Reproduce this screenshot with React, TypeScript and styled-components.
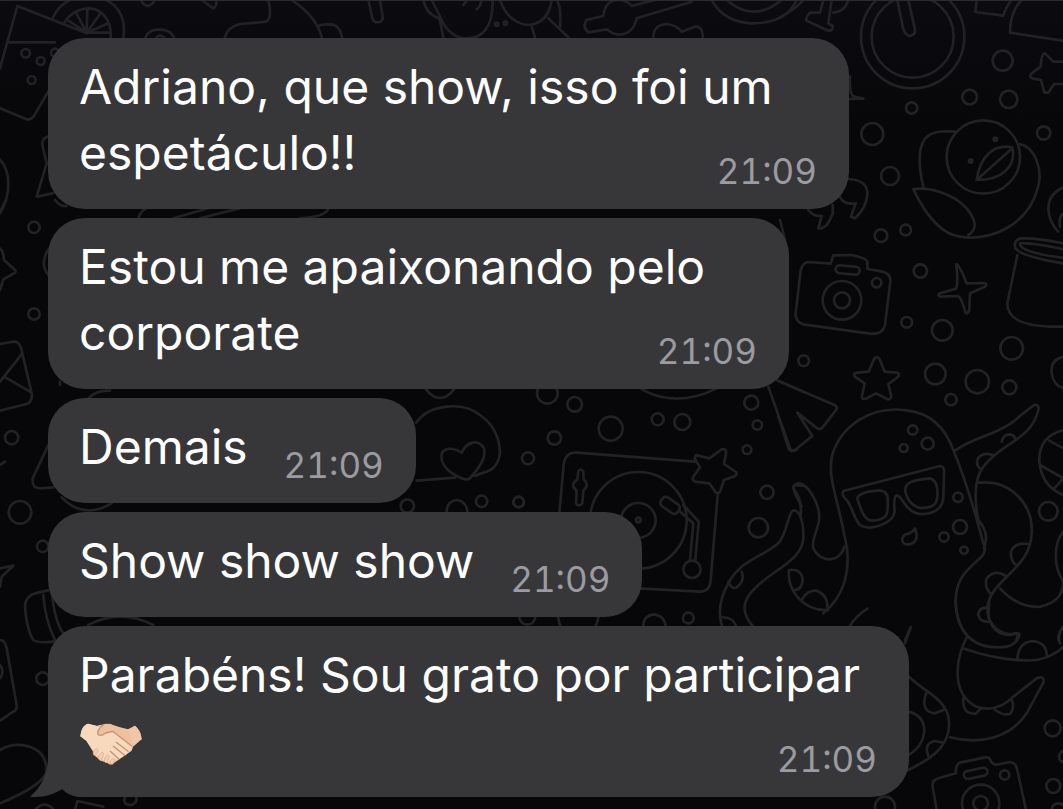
import React from "react";
import styled, { createGlobalStyle } from "styled-components";

const GlobalStyle = createGlobalStyle`
  * { box-sizing: border-box; }
  body { margin: 0; background: #070709; }
`;

const Screen = styled.main`
  position: relative;
  min-height: 100vh;
  overflow: hidden;
  padding: 38px 48px 12px;
  background: linear-gradient(#0b0b10 0, #070709 140px);
  font-family: Inter, "Liberation Sans", sans-serif;
`;

const Wallpaper = styled.svg`
  position: absolute;
  inset: 0;
  width: 100%;
  height: 100%;
  fill: none;
  stroke: #222225;
  stroke-width: 8;
  stroke-linecap: round;
  stroke-linejoin: round;
`;

const TopEdge = styled.div`
  position: absolute;
  inset: 0 0 auto;
  height: 1px;
  background: #2b2b2d;
`;

const Thread = styled.ol`
  position: relative;
  display: flex;
  flex-direction: column;
  align-items: flex-start;
  gap: 9px;
  margin: 0;
  padding: 0;
  list-style: none;
`;

const Bubble = styled.li<{ $width?: number }>`
  position: relative;
  display: grid;
  grid-template-columns: ${(p) => (p.$width ? "1fr" : "auto auto")};
  column-gap: 36px;
  width: ${(p) => (p.$width ? `${p.$width}px` : "auto")};
  max-width: 100%;
  padding: 16px 32px 23px 31px;
  border-radius: 37px;
  background: #373739;
`;

const Message = styled.p`
  grid-row: 1;
  grid-column: 1;
  margin: 0;
  color: #fff;
  font-size: 48px;
  line-height: 66px;
`;

const Line = styled.span`
  display: block;
  width: fit-content;
`;

const Stamp = styled.time`
  grid-row: 1;
  grid-column: -2;
  place-self: end;
  color: #9b9ba1;
  font-size: 35px;
  line-height: 30px;
  font-variant-numeric: tabular-nums;
`;

const Tail = styled.svg`
  position: absolute;
  left: -18px;
  bottom: 0;
  width: 54px;
  height: 54px;
  fill: #373739;
`;

const Emoji = styled.svg`
  display: inline-block;
  width: 64px;
  height: 44px;
  vertical-align: -8px;
`;

type Dot = [number, number, number];
const Dots = ({ at }: { at: Dot[] }) => (
  <>
    {at.map(([x, y, r]) => (
      <circle key={`${x}-${y}`} cx={x} cy={y} r={r} />
    ))}
  </>
);

const third = (x: number, y: number) => `translate(${x} ${y}) scale(.33333)`;

const Doodles = () => (
  <Wallpaper aria-hidden="true">
    {/* drink, lime slice and shapes at the top left */}
    <g transform={third(0, 0)}>
      <path d="M260 100L52 18L0 205M22 127H165M0 325L78 357Q92 362 102 348L150 265M158 55C180 0 235-15 285-10C350 0 380 50 370 112M192 70C220 20 285 10 315 50Q335 75 332 112M260 98L205 62M260 98L228 38M260 98L262 28M260 98L300 42M260 98L325 70M260 98H328" />
      <Dots at={[[77, 160, 13], [122, 183, 12], [95, 240, 12], [165, 158, 12]]} />
      <path d="M150 408Q125 412 127 435L140 490L110 590L158 580M-10 470C40 510 30 590 0 640M165 600Q180 620 200 618M415 655Q420 630 450 620M520 655L640 620M600 655L720 625M900 655Q980 650 985 625" />
      <path d="M425 5Q442 30 462 5M605 0L640 25Q650 20 650 0M437 112Q445 88 480 88Q512 90 522 112M470 112Q480 102 492 112M805 0Q820 65 790 66L720 72Q685 80 674 112M875 0Q950 50 965 112M955 78Q970 70 1000 75" />
    </g>

    {/* instruments and faces along the top edge */}
    <g transform={third(330, 0)}>
      <path d="M115 0L127 55Q130 70 150 66Q160 62 158 50L150 0M280 0Q290 45 328 55L340 112M305 0L328 45Q350 105 400 115Q490 120 488 0M0 72Q30 75 36 112M400 15L408 5M440 28Q455 15 453 0M510 0Q535 70 595 75Q655 70 665 0M605 78L615 112M655 55L715 112M690 80Q695 20 680 0M770 60L820 48Q825 0 865 0Q890 0 905 18L975 0M770 60Q755 80 775 97L830 88Q850 105 872 104Q910 100 920 55L1085 5M970 112Q970 75 1010 72Q1040 75 1055 95L1095 80Q1120 78 1118 112M1145 0Q1180 65 1265 70Q1370 70 1400 0M1190 0Q1270 70 1355 0" />
      <circle cx="500" cy="73" r="5" />
      <circle cx="526" cy="70" r="5" />
    </g>

    {/* compass, star and lemon bird */}
    <g transform={third(780, 0)}>
      <path d="M0 52Q50 25 70 0M130 0L120 38L90 38Q75 55 80 62L145 92Q160 92 158 78L145 70L150 35L155 0M160 38Q195 35 205 0" />
      <circle cx="398" cy="110" r="155" />
      <circle cx="398" cy="110" r="123" />
      <path d="M352 0L370 88Q378 108 390 108Q407 104 405 88L385 0M590 0L586 36L670 47Q678 20 695 0M725 0Q690 35 690 98L849 122M850 185L820 185L795 160Q784 160 782 200L755 220Q745 232 760 236L783 240L793 278L805 278L822 252H850M210 230Q208 275 218 288Q225 292 250 296L210 297" />
      <Dots at={[[668, 182, 30], [569, 291, 22], [686, 298, 26], [395, 324, 17], [277, 402, 33], [330, 528, 27], [791, 399, 20], [303, 707, 19], [377, 690, 16]]} />
      <circle cx="610" cy="471" r="110" />
      <path d="M525 395Q475 390 450 404C410 425 415 500 430 560M718 432C765 440 790 510 773 565C745 670 640 725 540 710C470 700 425 620 400 568C445 560 520 580 560 625Q605 680 565 705M590 540C600 470 640 430 697 442C710 500 665 540 590 540L697 445" />
      <circle cx="572" cy="483" r="5" />
      <circle cx="646" cy="418" r="5" />
      <path d="M205 537Q265 540 262 585Q258 625 225 655L213 650L227 610Q190 615 180 590M85 630Q100 650 125 648L115 685Q140 690 158 640L158 615M850 562Q800 585 806 635Q810 670 835 695M850 640Q835 650 840 680M0 660L15 720" />
    </g>

    {/* camera, sparkle, pot and star */}
    <g transform={third(780, 230)}>
      <path d="M85 96L152 101L160 76L215 75Q260 85 262 95L262 117L305 124Q333 130 331 155L315 285Q308 315 270 311L70 283Q45 275 47 250L62 120Q68 98 85 96Z" />
      <rect x="167" y="108" width="72" height="24" rx="12" transform="rotate(5 203 120)" />
      <circle cx="186" cy="211" r="58" />
      <Dots at={[[186, 211, 24], [290, 158, 14], [421, 123, 20], [380, 277, 16], [487, 301, 31], [695, 355, 34], [71, 392, 16], [466, 432, 31], [592, 455, 35], [688, 472, 21], [513, 509, 17], [398, 600, 14], [443, 641, 18], [371, 654, 12]]} />
      <path d="M529 103Q538 103 560 160L612 159Q625 162 615 170L570 190L568 240Q563 255 556 247Q545 205 535 198L480 200Q470 195 480 190L528 176Q535 160 529 103ZM283 385Q291 376 299 388L314 425L352 428Q363 433 350 444L325 462L334 500Q330 513 318 505L288 490L258 506Q243 510 246 498L254 460L224 440Q218 428 232 428L266 425Z" />
      <path d="M850 40Q760 22 718 26Q700 35 706 55Q725 80 850 100M850 58Q760 38 720 40Q715 65 850 84M712 75L682 220Q680 285 810 290H850M850 380Q810 390 815 430Q820 465 850 475M0 455L162 524Q175 530 168 540L128 592Q118 602 108 592L52 548L97 618L45 660Q32 668 26 655L-5 560" />
    </g>

    {/* octopus wearing glasses */}
    <g transform={third(780, 400)}>
      <path d="M130 640C190 590 220 510 193 405C170 285 140 225 158 160C185 80 270 15 380 31C460 40 500 95 520 150C545 210 570 280 610 430Q622 455 600 475C560 510 520 540 528 625Q535 690 580 722M523 153C590 105 640 110 700 65Q740 30 765 14Q778 12 775 30C755 120 660 130 610 200C580 240 585 310 595 360Q630 400 612 445M598 248C690 240 760 310 755 400C750 510 635 535 622 620C620 690 680 710 715 700L708 725M660 565Q715 625 780 620Q850 605 850 545C820 500 820 430 850 395M665 125Q670 103 690 103Q705 105 706 120M605 210Q585 195 594 175Q610 155 637 165M743 432Q705 425 693 455Q690 485 712 498M680 530Q645 505 620 535Q612 560 632 582M625 622Q595 622 595 645Q600 668 628 665" />
      <path d="M190 273L480 198Q495 200 492 220L490 290C490 335 440 350 405 338C370 325 370 290 350 286Q340 290 344 335C340 370 270 395 240 375C220 355 215 310 195 295Q185 285 190 273ZM232 296Q235 275 300 271Q325 275 323 300C325 340 325 360 275 362C250 360 240 320 232 296ZM376 264Q380 240 450 235Q470 240 472 270C475 310 465 325 420 324C390 315 375 290 376 264ZM405 385Q420 425 388 433Q365 435 367 415Q370 402 388 400Q400 395 405 385Z" />
      <Dots at={[[534, 292, 14], [540, 381, 21], [492, 411, 14], [552, 451, 11], [805, 334, 28]]} />
      <path d="M193 440C180 490 120 490 100 445C90 405 140 370 105 300Q80 250 55 250Q35 255 42 268C60 290 65 315 62 345M-80 680Q-135 620 -75 565C-25 510 75 480 70 405C70 350 50 320 35 335C20 360 20 400 -5 430C-50 470 -120 480 -155 550Q-200 630 -165 700M27 510C20 570 70 635 145 630M27 510Q65 505 68 540Q65 570 45 570M65 600Q80 570 110 572Q145 585 142 628M210 678Q225 650 262 626M375 720L392 682M850 90Q775 110 778 185Q785 260 850 285M808 122L850 145M780 195L850 235L820 268M850 685Q835 695 835 720" />
    </g>

    {/* lower tentacles and the second camera */}
    <g transform={third(880, 600)}>
      <path d="M227 0C230 120 300 150 380 140Q415 130 418 102Q410 95 390 105Q340 105 325 50L328 0M262 108C215 200 225 290 290 320Q350 340 400 290L470 235Q495 225 490 248L440 340C390 415 300 435 210 412M248 145C320 170 400 185 470 180Q520 170 550 140M412 178Q415 125 460 123Q500 130 500 165M250 295Q245 340 285 342L305 325M345 330Q375 350 392 340Q405 320 395 300M75 130L92 82M85 228C130 275 190 290 205 350C220 430 160 475 80 512M85 335Q130 345 133 390Q130 440 85 465M138 280Q120 335 165 340L190 330M145 468Q130 430 165 423L188 428M550 80Q530 100 540 130" />
      <path d="M170 630L158 560Q155 540 175 535L228 520Q225 495 240 488L315 472Q330 470 333 485L345 495L390 486Q408 488 412 510L438 630" />
      <rect x="251" y="508" width="72" height="24" rx="12" transform="rotate(-12 287 520)" />
      <circle cx="302" cy="610" r="56" />
      <Dots at={[[302, 610, 22], [374, 525, 14], [518, 385, 24], [520, 558, 21], [535, 630, 20], [555, 470, 18], [15, 620, 30]]} />
    </g>

    {/* turntable */}
    <g transform={third(520, 380)}>
      <Dots at={[[82, 40, 31], [164, 73, 22], [272, 146, 36], [413, 118, 18], [487, 126, 24], [103, 174, 20], [24, 235, 18], [694, 68, 21], [712, 135, 14], [681, 209, 13], [741, 337, 20], [715, 443, 29], [505, 714, 16], [-4, 366, 16], [22, 710, 24]]} />
      <path d="M118 398L130 265Q132 215 170 218L525 245M593 345L572 600Q570 635 540 635L355 625M528 225L568 235L605 208Q620 205 618 220L612 252L648 276Q655 284 640 290L612 300L600 335Q592 345 586 335L568 310L525 305Q515 300 520 290L540 262L524 235ZM175 275Q182 262 190 275L191 298Q210 315 190 332L187 370Q177 382 168 370L170 332Q148 315 172 298Z" />
      <circle cx="355" cy="421" r="145" />
      <circle cx="355" cy="421" r="52" />
      <circle cx="355" cy="420" r="7" />
      <rect x="420" y="360" width="60" height="32" rx="12" transform="rotate(35 450 376)" />
      <path d="M478 393L520 430L510 540M490 375L536 425L526 540M365 28Q470 85 590 25M745 20L810 205Q818 218 832 208M770 0L850 35M115 712Q120 770 175 770Q225 770 235 712M370 738Q370 705 405 703Q435 710 437 738M665 575Q675 605 650 622Q635 630 625 605M600 712Q640 710 648 738M850 318L825 315Q815 320 830 350L845 380" />
      <circle cx="516" cy="568" r="26" />
    </g>

    {/* heart cloud */}
    <g transform={third(400, 380)}>
      <path d="M48 128C90 70 190 65 240 105C300 145 305 215 295 240C280 280 245 275 225 288M50 302L165 293M185 218C200 185 235 175 252 205C260 240 230 270 210 295Q195 303 175 290C130 270 120 240 126 218C140 200 165 205 185 218ZM78 28Q120 80 162 28M140 395Q140 362 172 360Q200 365 202 395" />
      <Dots at={[[22, 378, 20], [245, 364, 17], [356, 366, 15]]} />
    </g>

    {/* left margin: star, envelope and bubbles */}
    <g transform={third(0, 200)}>
      <Dots at={[[102, 82, 17], [102, 342, 17], [35, 713, 20], [60, 937, 34], [128, 1039, 17]]} />
      <path d="M0 145Q10 150 12 180L45 210Q50 218 38 222L10 238L0 270M0 432L45 424Q62 428 67 460L95 580Q98 605 80 612L0 632M67 460L12 530L90 575M12 530L0 545M18 0L0 35M145 148Q118 190 145 225M180 545V555M265 595Q290 570 330 572M145 735L98 835Q95 865 120 865L160 862M185 892Q250 960 335 910M0 795L15 785M0 1105L40 1097L5 1130L0 1160M170 1165L105 1180Q75 1190 75 1220Q80 1290 100 1320Q115 1330 160 1325M130 1185Q135 1260 165 1320M155 1175Q165 1270 190 1300" />
    </g>
    <g transform={third(0, 600)}>
      <path d="M0 120Q15 120 20 145L50 315Q52 330 40 335L0 362M0 195Q15 215 0 235M0 450Q40 425 90 440Q145 460 138 520Q120 560 0 610M265 75Q360 25 460 75M105 630Q130 600 158 625M225 630L232 603L310 620M375 590Q365 615 395 615Q415 605 408 590" />
      <Dots at={[[128, 236, 19]]} />
    </g>
  </Wallpaper>
);

const Handshake = () => (
  <Emoji viewBox="0 0 192 132" role="img" aria-label="Aperto de mãos">
    <path d="M7 27Q13 9 27 5L54 12L72 9L91 5L120 15L147 22L168 11Q186 26 188 52L162 74L158 86L139 100L105 123Q95 132 85 123L66 116L48 102L42 85L22 56L4 43Z" fill="#edc7a9" />
    <path d="M7 27Q13 9 27 5L54 12L72 9L58 28L62 40L80 33L104 29L158 72Q163 84 151 86L139 99L105 117L85 120L48 98L22 56L4 43Z" fill="#f7d9bd" />
    <path d="M54 12Q64 9 78 6Q93 4 105 12L148 27Q158 45 160 68L116 39L102 27L80 33Q66 46 55 34Q54 25 66 17Z" fill="#edc0a0" />
    <path d="M72 10Q53 24 57 37Q64 45 80 33L101 28L158 72M112 61L147 88M103 73L137 100M94 88L119 111" fill="none" stroke="#c99170" strokeWidth="4" strokeLinecap="round" strokeLinejoin="round" />
    <path d="M45 86Q52 75 58 85L48 101Q39 98 45 86M60 99Q68 86 75 95L66 116Q53 112 60 99M78 109Q85 94 91 104L84 122Q72 122 78 109M95 115Q101 105 108 112L101 127Q90 127 95 115" fill="#f5cfb0" stroke="#d9a583" strokeWidth="2" />
    <path d="M148 23L168 11Q186 26 188 52L165 62Q164 38 148 23Z" fill="#f2c5a7" />
  </Emoji>
);

type Entry = { lines: string[]; width?: number; emoji?: boolean };

const entries: Entry[] = [
  { lines: ["Adriano, que show, isso foi um", "espetáculo!!"], width: 801 },
  { lines: ["Estou me apaixonando pelo", "corporate"], width: 741 },
  { lines: ["Demais"] },
  { lines: ["Show show show"] },
  { lines: ["Parabéns! Sou grato por participar"], width: 861, emoji: true },
];

export default function App() {
  return (
    <>
      <GlobalStyle />
      <Screen>
        <Doodles />
        <TopEdge />
        <Thread>
          {entries.map((entry) => (
            <Bubble key={entry.lines[0]} $width={entry.width}>
              {entry.emoji && (
                <Tail viewBox="0 0 162 162" aria-hidden="true">
                  <path d="M54 20V45C53 95 32 135 0 161Q55 166 97 138Q112 157 144 162H162V20Z" />
                </Tail>
              )}
              <Message>
                {entry.lines.map((line) => (
                  <Line key={line}>{line}</Line>
                ))}
                {entry.emoji && (
                  <Line>
                    <Handshake />
                  </Line>
                )}
              </Message>
              <Stamp dateTime="21:09">21:09</Stamp>
            </Bubble>
          ))}
        </Thread>
      </Screen>
    </>
  );
}
